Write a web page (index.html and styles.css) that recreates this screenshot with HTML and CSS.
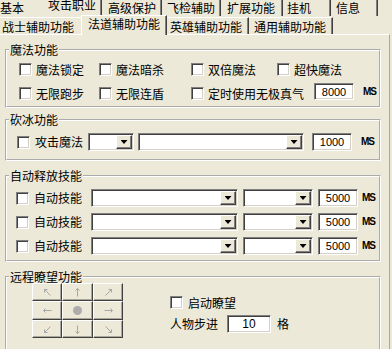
FILE: index.html
```html
<!DOCTYPE html>
<html lang="zh-cn">
<head>
    <meta charset="UTF-8">
    <meta name="viewport" content="width=device-width, initial-scale=1.0">
    <title>法道辅助功能</title>
    <link rel="stylesheet" href="styles.css">
</head>
<body>
    <div class="window">
        <div class="tabrow top">
            <span class="tab">基本</span>
            <span class="tab on">攻击职业</span>
            <span class="tab">高级保护</span>
            <span class="tab">飞检辅助</span>
            <span class="tab">扩展功能</span>
            <span class="tab">挂机</span>
            <span class="tab">信息</span>
        </div>
        <div class="tabrow sub">
            <span class="tab">战士辅助功能</span>
            <span class="tab on">法道辅助功能</span>
            <span class="tab">英雄辅助功能</span>
            <span class="tab">通用辅助功能</span>
        </div>

        <div class="panel">
            <fieldset class="group magic">
                <legend>魔法功能</legend>
                <div class="magic-grid">
                    <label class="chk"><span class="box"></span>魔法锁定</label>
                    <label class="chk"><span class="box"></span>魔法暗杀</label>
                    <label class="chk"><span class="box"></span>双倍魔法</label>
                    <label class="chk"><span class="box"></span>超快魔法</label>
                    <label class="chk"><span class="box"></span>无限跑步</label>
                    <label class="chk"><span class="box"></span>无限连盾</label>
                    <div class="timed">
                        <label class="chk"><span class="box"></span>定时使用无极真气</label>
                        <span class="num">8000</span>
                        <span class="unit">MS</span>
                    </div>
                </div>
            </fieldset>

            <fieldset class="group ice">
                <legend>砍冰功能</legend>
                <div class="row">
                    <label class="chk"><span class="box"></span>攻击魔法</label>
                    <span class="combo c-key"><span class="btn"></span></span>
                    <span class="combo c-spell"><span class="btn"></span></span>
                    <span class="num">1000</span>
                    <span class="unit">MS</span>
                </div>
            </fieldset>

            <fieldset class="group auto">
                <legend>自动释放技能</legend>
                <div class="rows">
                    <div class="row">
                        <label class="chk"><span class="box"></span>自动技能</label>
                        <span class="combo c-skill"><span class="btn"></span></span>
                        <span class="combo c-mod"><span class="btn"></span></span>
                        <span class="num">5000</span>
                        <span class="unit">MS</span>
                    </div>
                    <div class="row">
                        <label class="chk"><span class="box"></span>自动技能</label>
                        <span class="combo c-skill"><span class="btn"></span></span>
                        <span class="combo c-mod"><span class="btn"></span></span>
                        <span class="num">5000</span>
                        <span class="unit">MS</span>
                    </div>
                    <div class="row">
                        <label class="chk"><span class="box"></span>自动技能</label>
                        <span class="combo c-skill"><span class="btn"></span></span>
                        <span class="combo c-mod"><span class="btn"></span></span>
                        <span class="num">5000</span>
                        <span class="unit">MS</span>
                    </div>
                </div>
            </fieldset>

            <fieldset class="group look">
                <legend>远程瞭望功能</legend>
                <div class="look-body">
                    <div class="pad">
                        <span class="dir"><svg width="11" height="11" viewBox="0 0 11 11"><path d="M2.5 2.5L8.5 8.5M2.5 2.5H5.5M2.5 2.5V5.5"/></svg></span>
                        <span class="dir"><svg width="11" height="11" viewBox="0 0 11 11"><path d="M5.5 1.5V9.5M3.5 3.5L5.5 1.5L7.5 3.5"/></svg></span>
                        <span class="dir"><svg width="11" height="11" viewBox="0 0 11 11"><path d="M8.5 2.5L2.5 8.5M8.5 2.5H5.5M8.5 2.5V5.5"/></svg></span>
                        <span class="dir"><svg width="11" height="11" viewBox="0 0 11 11"><path d="M1.5 5.5H9.5M3.5 3.5L1.5 5.5L3.5 7.5"/></svg></span>
                        <span class="dir"><span class="dot"></span></span>
                        <span class="dir"><svg width="11" height="11" viewBox="0 0 11 11"><path d="M1.5 5.5H9.5M7.5 3.5L9.5 5.5L7.5 7.5"/></svg></span>
                        <span class="dir"><svg width="11" height="11" viewBox="0 0 11 11"><path d="M8.5 2.5L2.5 8.5M2.5 8.5H5.5M2.5 8.5V5.5"/></svg></span>
                        <span class="dir"><svg width="11" height="11" viewBox="0 0 11 11"><path d="M5.5 1.5V9.5M3.5 7.5L5.5 9.5L7.5 7.5"/></svg></span>
                        <span class="dir"><svg width="11" height="11" viewBox="0 0 11 11"><path d="M2.5 2.5L8.5 8.5M8.5 8.5H5.5M8.5 8.5V5.5"/></svg></span>
                    </div>
                    <div class="look-opts">
                        <label class="chk"><span class="box"></span>启动瞭望</label>
                        <div class="step">
                            <span>人物步进</span>
                            <span class="num wide">10</span>
                            <span class="cell">格</span>
                        </div>
                    </div>
                </div>
            </fieldset>
        </div>
    </div>
</body>
</html>
```

FILE: styles.css
```css
body {
    margin: 0;
    background-color: #ECE9D8;
    color: #000000;
    font-family: "Noto Sans CJK SC", "Noto Sans", sans-serif;
    font-size: 12px;
    line-height: 12px;
    overflow: hidden;
}
.window {
    width: 392px;
    height: 349px;
    overflow: hidden;
}

/* tab strips */
.tabrow {
    display: flex;
    align-items: flex-start;
    height: 17px;
}
.tab {
    box-sizing: border-box;
    white-space: nowrap;
}
.top .tab {
    height: 16px;
    padding-top: 2px;
    border-right: 1px solid #404040;
    box-shadow: inset -1px 0 #808080;
}
.top .tab:nth-child(1) { width: 42px; border-right: none; box-shadow: none; }
.top .tab:nth-child(2) { width: 60px; padding-left: 6px; }
.top .tab:nth-child(3) { width: 60px; padding-left: 6px; }
.top .tab:nth-child(4) { width: 59px; padding-left: 5px; }
.top .tab:nth-child(5) { width: 62px; padding-left: 6px; }
.top .tab:nth-child(6) { width: 48px; padding-left: 4px; }
.top .tab:nth-child(7) { width: 47px; padding-left: 5px; }
.top .tab.on {
    height: 17px;
    margin-top: -2px;
    padding-top: 1px;
}

.sub .tab {
    height: 17px;
    padding-top: 3px;
    border-top: 1px solid #FFFFFF;
    border-right: 1px solid #404040;
    box-shadow: inset -1px 0 #808080;
}
.sub .tab:nth-child(1) { width: 81px; padding-left: 2px; border-right: none; box-shadow: none; }
.sub .tab:nth-child(2) { width: 86px; padding-left: 6px; }
.sub .tab:nth-child(3) { width: 82px; padding-left: 3px; }
.sub .tab:nth-child(4) { width: 84px; padding-left: 5px; }
.sub .tab.on {
    position: relative;
    z-index: 1;
    height: 20px;
    margin-top: -2px;
    padding-top: 2px;
    border-left: 1px solid #FFFFFF;
    background-color: #ECE9D8;
}

.panel {
    box-sizing: border-box;
    width: 390px;
    height: 320px;
    padding: 8px 0 0 5px;
    border-top: 1px solid #FFFFFF;
    border-right: 1px solid #ACA899;
}

/* group boxes */
.group {
    box-sizing: border-box;
    width: 376px;
    min-width: 0;
    margin: 0;
    padding: 0;
    border: 2px groove #FFFFFF;
}
.group legend {
    margin-left: 2px;
    padding: 0 1px;
    line-height: 13px;
}
.ice { margin-top: 5px; }
.auto { margin-top: 8px; }
.look { margin-top: 8px; height: 90px; }

/* controls */
.chk {
    display: flex;
    align-items: center;
    gap: 4px;
    white-space: nowrap;
}
.box {
    box-sizing: border-box;
    width: 13px;
    height: 13px;
    flex: none;
    background-color: #FFFFFF;
    border: 1px solid;
    border-color: #808080 #FFFFFF #FFFFFF #808080;
    box-shadow: inset 1px 1px #404040, inset -1px -1px #D4D0C8;
}
.num {
    box-sizing: border-box;
    width: 40px;
    height: 17px;
    flex: none;
    display: flex;
    align-items: center;
    justify-content: center;
    background-color: #FFFFFF;
    border: 1px solid;
    border-color: #808080 #FFFFFF #FFFFFF #808080;
    box-shadow: inset 1px 1px #404040, inset -1px -1px #D4D0C8;
    font-family: "Liberation Sans", Arial, sans-serif;
    font-size: 11px;
}
.unit {
    font-family: "Liberation Sans", Arial, sans-serif;
    font-size: 10px;
    font-weight: bold;
    letter-spacing: -1px;
}
.combo {
    box-sizing: border-box;
    height: 18px;
    flex: none;
    display: flex;
    justify-content: flex-end;
    padding: 2px;
    background-color: #FFFFFF;
    border: 1px solid;
    border-color: #808080 #FFFFFF #FFFFFF #808080;
    box-shadow: inset 1px 1px #404040, inset -1px -1px #D4D0C8;
}
.combo .btn {
    box-sizing: border-box;
    width: 16px;
    height: 14px;
    margin: -1px -1px 0 0;
    display: flex;
    align-items: center;
    justify-content: center;
    background-color: #ECE9D8;
    border: 1px solid;
    border-color: #FFFFFF #404040 #404040 #FFFFFF;
    box-shadow: inset -1px -1px #808080;
}
.combo .btn::after {
    content: "";
    width: 7px;
    height: 4px;
    background-color: #000000;
    clip-path: polygon(0 0, 100% 0, 50% 100%);
}

/* 魔法功能 */
.magic-grid {
    display: grid;
    grid-template-columns: 80px 92px 86px auto;
    row-gap: 7px;
    align-items: end;
    padding: 7px 0 6px 12px;
}
.timed {
    grid-column: span 2;
    display: flex;
    align-items: flex-end;
}
.timed .num { margin-left: 10px; }
.timed .unit { margin-left: 9px; margin-bottom: 2px; }

/* 砍冰 / 自动 */
.row {
    display: flex;
    align-items: center;
}
.ice .row { padding: 7px 0 8px 10px; }
.ice .chk { gap: 5px; }
.c-key { width: 46px; margin-left: 5px; }
.c-spell { width: 166px; margin-left: 4px; }
.ice .num { margin-left: 8px; height: 18px; }
.ice .unit { margin-left: 9px; }

.rows {
    display: flex;
    flex-direction: column;
    gap: 6px;
    padding: 7px 0 5px 9px;
}
.auto .chk { gap: 5px; }
.c-skill { width: 147px; margin-left: 9px; }
.c-mod { width: 70px; margin-left: 5px; }
.auto .num { margin-left: 5px; height: 18px; }
.auto .unit { margin-left: 4px; }

/* 远程瞭望 */
.look-body {
    display: flex;
    padding: 0 0 0 25px;
}
.pad {
    display: grid;
    grid-template-columns: 30px 31px 30px;
    grid-template-rows: 18px 19px 18px;
}
.dir {
    box-sizing: border-box;
    display: flex;
    align-items: center;
    justify-content: center;
    border: 1px solid;
    border-color: #FFFFFF #404040 #404040 #FFFFFF;
    box-shadow: inset -1px -1px #ACA899;
}
.dir svg {
    fill: none;
    stroke: #A6A6A6;
    stroke-width: 1;
}
.dot {
    width: 9px;
    height: 9px;
    border-radius: 50%;
    background-color: #ACACAC;
}
.look-opts {
    display: flex;
    flex-direction: column;
    gap: 6px;
    margin-left: 47px;
    padding-top: 13px;
}
.look-opts .chk { gap: 5px; }
.step {
    display: flex;
    align-items: center;
}
.step .num.wide {
    width: 44px;
    height: 18px;
    margin-left: 9px;
    font-size: 12px;
}
.step .cell { margin-left: 6px; }
```
